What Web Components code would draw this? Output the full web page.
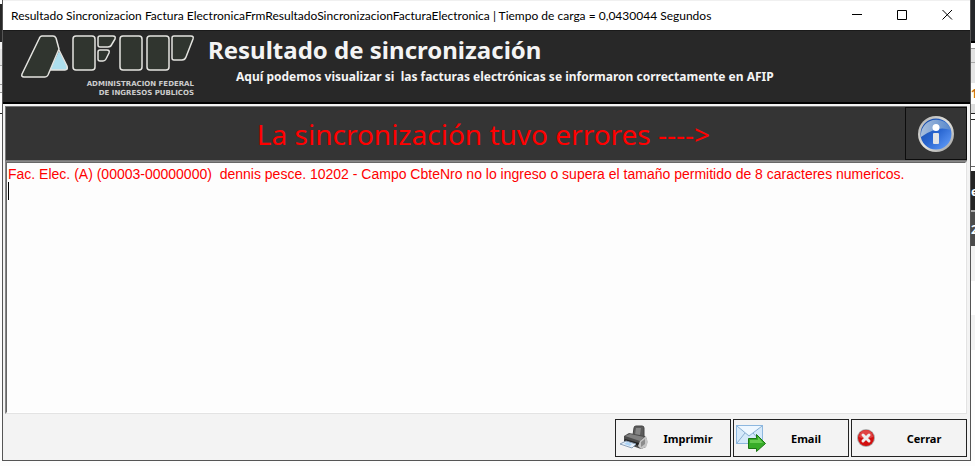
<!DOCTYPE html>
<html lang="es">
<head>
<meta charset="utf-8">
<title>Resultado Sincronizacion Factura Electronica</title>
<style>
  html, body { height: 100%; }
  body {
    margin: 0;
    background: #fdfdfd;
    font-family: "Noto Sans", "Open Sans", sans-serif;
  }
</style>
</head>
<body>
<desktop-area>
  <backdrop-strip slot="left" side="left"></backdrop-strip>
  <app-window>
    <title-bar slot="title">Resultado Sincronizacion Factura ElectronicaFrmResultadoSincronizacionFacturaElectronica | Tiempo de carga = 0,0430044 Segundos</title-bar>
    <form-header slot="header">
      <afip-logo slot="logo"></afip-logo>
      <span slot="heading">Resultado de sincronización</span>
      <span slot="detail">Aquí podemos visualizar si&nbsp; las facturas electrónicas se informaron correctamente en AFIP</span>
    </form-header>
    <status-banner>La sincronización tuvo errores ----&gt;</status-banner>
    <result-log label="Resultado" value="Fac. Elec. (A) (00003-00000000)  dennis pesce. 10202 - Campo CbteNro no lo ingreso o supera el tamaño permitido de 8 caracteres numericos."></result-log>
    <action-button slot="actions" icon="printer">Imprimir</action-button>
    <action-button slot="actions" icon="email">Email</action-button>
    <action-button slot="actions" icon="close">Cerrar</action-button>
  </app-window>
  <backdrop-strip slot="right" side="right">
    <span>1</span>
    <span>e</span>
    <span>2</span>
  </backdrop-strip>
</desktop-area>

<script>
class DesktopArea extends HTMLElement {
  constructor() {
    super();
    this.attachShadow({ mode: 'open' });
    this.shadowRoot.innerHTML = `
      <style>
        :host {
          display: grid;
          grid-template-columns: 2px 1fr 4px;
          height: 100vh;
          overflow: hidden;
        }
        main { display: flex; min-width: 0; padding-bottom: 5px; }
        ::slotted(app-window) { flex: 1; min-width: 0; }
      </style>
      <slot name="left"></slot>
      <main><slot></slot></main>
      <slot name="right"></slot>
    `;
  }
}

// The slice of the program behind that shows beside the dialog
class BackdropStrip extends HTMLElement {
  constructor() {
    super();
    this.attachShadow({ mode: 'open' });
    this.shadowRoot.innerHTML = `
      <style>
        :host { display: block; overflow: hidden; }
        :host([side="left"]) {
          background: linear-gradient(#fff 4px, #262626 4px 42px, #f4f4f4 42px 49px, #e6e6e6 49px 65px, #aaa 65px 66px,
            #f2f2f2 66px 84px, #999 84px 85px, #f2f2f2 85px 92px, #999 92px 93px, #fff 93px 113px, #222 113px 114px, #fdfdfd 114px);
        }
        :host([side="right"]) {
          background: linear-gradient(#242629 41px, #000 41px 43px, #fff 43px 48px, #999 48px 49px, #e2e2e2 49px 62px,
            #aaa 62px 63px, #e5e5e5 63px 83px, #fff 83px 104px, #ddd 104px 113px, #222 113px 114px, #fff 114px 119px,
            #222 119px 120px, #fff 120px 166px, #666 166px 167px, #fff 167px 171px, #242424 171px 210px, #aaa 210px 212px,
            #4b4b4b 212px 246px, #f2f2f2 246px 281px, #fff 281px 315px, #f2f2f2 315px 350px, #fdfdfd 350px);
        }
        ::slotted(span) {
          display: block;
          padding-top: 20px;
          color: #fff;
          font: bold 12px/18px "Noto Sans", sans-serif;
        }
        ::slotted(span:first-child) { padding: 85px 0 60px; color: #c46a10; }
      </style>
      <slot></slot>
    `;
  }
}

class AppWindow extends HTMLElement {
  constructor() {
    super();
    this.attachShadow({ mode: 'open' });
    this.shadowRoot.innerHTML = `
      <style>
        :host {
          display: flex;
          flex-direction: column;
          box-sizing: border-box;
          border: 1px solid #555;
          border-top: 0;
          background: #f3f3f3;
        }
        .body {
          flex: 1;
          display: flex;
          flex-direction: column;
          min-height: 0;
          padding: 2px 3px 0 2px;
        }
        ::slotted(result-log) { flex: 1; }
        footer {
          display: flex;
          justify-content: flex-end;
          gap: 2px;
          padding: 5px 3px 3px;
        }
      </style>
      <slot name="title"></slot>
      <slot name="header"></slot>
      <div class="body"><slot></slot></div>
      <footer><slot name="actions"></slot></footer>
    `;
  }
}

class TitleBar extends HTMLElement {
  constructor() {
    super();
    this.attachShadow({ mode: 'open' });
    this.shadowRoot.innerHTML = `
      <style>
        :host {
          display: flex;
          align-items: center;
          height: 29px;
          padding-left: 8px;
          border-top: 1px solid #f0f0f0;
          background: #fff;
          color: #000;
          font: 12px Lato, sans-serif;
        }
        .caption { flex: 1; min-width: 0; overflow: hidden; white-space: nowrap; }
        .controls { display: flex; }
        button {
          width: 45px;
          height: 28px;
          padding: 0;
          border: 0;
          background: none;
        }
        svg { display: block; margin: auto; fill: none; stroke: #000; }
      </style>
      <span class="caption"><slot></slot></span>
      <span class="controls">
        <button aria-label="Minimizar"><svg width="11" height="11"><path d="M0 4.500H10"/></svg></button>
        <button aria-label="Maximizar"><svg width="11" height="11"><path d="M.5.500H9.500V9.500H.5Z"/></svg></button>
        <button aria-label="Cerrar"><svg width="11" height="11"><path d="M.5 0 10 9.500M10 0 .5 9.500"/></svg></button>
      </span>
    `;
  }
}

class FormHeader extends HTMLElement {
  constructor() {
    super();
    this.attachShadow({ mode: 'open' });
    this.shadowRoot.innerHTML = `
      <style>
        :host {
          display: flex;
          box-sizing: border-box;
          height: 74px;
          padding-left: 16px;
          gap: 13px;
          border-top: 1px solid #1a1a1a;
          border-bottom: 2px solid #000;
          background: #282828;
          color: #f4f4f4;
        }
        h1 { margin: 3px 0 0; font: bold 24px/32px "Noto Sans", sans-serif; white-space: nowrap; }
        p { margin: 3px 0 0 28px; font: bold 12px/16px "Noto Sans", sans-serif; white-space: nowrap; }
      </style>
      <slot name="logo"></slot>
      <div>
        <h1><slot name="heading"></slot></h1>
        <p><slot name="detail"></slot></p>
      </div>
    `;
  }
}

class AfipLogo extends HTMLElement {
  constructor() {
    super();
    this.attachShadow({ mode: 'open' });
    this.shadowRoot.innerHTML = `
      <style>
        :host { display: block; width: 176px; padding-top: 3px; }
        svg { display: block; }
        .mark { fill: #30352f; stroke: #e4e4e0; stroke-width: 1.500; stroke-linejoin: round; }
        text { fill: #ccc; font: bold 7px "DejaVu Sans", sans-serif; text-anchor: end; }
      </style>
      <svg width="176" height="64" viewBox="19 34 176 64" role="img" aria-label="AFIP">
        <path d="M59 51 68 68Q68 70 66 70H50Z" fill="#addfee"/>
        <g class="mark">
          <path d="M42 36H53Q55 36 56 38L59 49 48 75Q47 77 45 77H24Q21 77 22 74L39 39Q40 36 42 36Z"/>
          <path d="M59 50 67 66Q68 70 65 70H50" style="fill:none"/>
          <rect x="73" y="36" width="22" height="34" rx="3"/>
          <path d="M100 36H113Q116 36 115 39L112 44Q111 47 108 47H100Q98 47 98 45V38Q98 36 100 36Z"/>
          <path d="M100 50H107Q110 50 109 53L106 59Q105 61 103 61H100Q98 61 98 59V52Q98 50 100 50Z"/>
          <rect x="120" y="36" width="22" height="34" rx="3"/>
          <rect x="147" y="36" width="22" height="34" rx="3"/>
          <path d="M174 36H191Q194 36 193 39L186 57Q185 60 182 60H174Q172 60 172 58V38Q172 36 174 36Z"/>
        </g>
        <text x="194" y="86">ADMINISTRACION FEDERAL</text>
        <text x="194" y="95">DE INGRESOS PUBLICOS</text>
      </svg>
    `;
  }
}

class StatusBanner extends HTMLElement {
  constructor() {
    super();
    this.attachShadow({ mode: 'open' });
    this.shadowRoot.innerHTML = `
      <style>
        :host {
          display: flex;
          align-items: stretch;
          height: 53px;
          border: 1px solid #777;
          border-width: 1px 0 1px 1px;
          background: #343434;
          color: #f00;
          font: 28px "Noto Sans", sans-serif;
        }
        /* left padding balances the button, so the text centres on the window */
        .text { flex: 1; align-self: center; padding-left: 56px; text-align: center; }
        button {
          width: 62px;
          padding: 0;
          border: 1px solid #0c0c0c;
          background: #343434;
        }
        svg { display: block; margin: auto; }
      </style>
      <span class="text"><slot></slot></span>
      <button aria-label="Información">
        <svg width="38" height="38" viewBox="0 0 38 38">
          <defs>
            <linearGradient id="rim" x1="0" y1="0" x2="1" y2="1">
              <stop offset="0" stop-color="#aaa"/><stop offset=".5" stop-color="#e4e4e0"/><stop offset="1" stop-color="#999"/>
            </linearGradient>
            <linearGradient id="sea" x1="0" y1="0" x2="1" y2="1">
              <stop offset="0" stop-color="#1748a0"/><stop offset=".5" stop-color="#2865d0"/><stop offset="1" stop-color="#6aa4ff"/>
            </linearGradient>
            <linearGradient id="sky" x1="0" y1="0" x2="1" y2="0">
              <stop offset="0" stop-color="#a9bfdc"/><stop offset="1" stop-color="#5788cc"/>
            </linearGradient>
          </defs>
          <circle cx="19" cy="19" r="18" fill="url(#rim)"/>
          <circle cx="19" cy="19" r="15.500" fill="url(#sea)"/>
          <path d="M4 22A15.500 15.500 0 0 1 34 15Q25 12 17 15T4 22Z" fill="url(#sky)"/>
          <circle cx="19" cy="12.500" r="3.500" fill="#fff"/>
          <rect x="16" y="18" width="6" height="11" rx="1" fill="#e2e4e6"/>
        </svg>
      </button>
    `;
  }
}

class ResultLog extends HTMLElement {
  constructor() {
    super();
    this.attachShadow({ mode: 'open' });
    this.shadowRoot.innerHTML = `
      <style>
        :host {
          display: flex;
          position: relative;
          min-height: 0;
          border: 1px solid #888;
          border-right-color: #e3e3e3;
          border-bottom-color: #e3e3e3;
        }
        textarea {
          flex: 1;
          min-width: 0;
          margin: 0;
          padding: 3px 0 0 1px;
          border: 1px solid #666;
          border-right-color: #fff;
          border-bottom-color: #fff;
          border-radius: 0;
          outline: 0;
          resize: none;
          overflow: hidden;
          background: #fdfdfd;
          color: #f00;
          font: 14px/17px "Liberation Sans", sans-serif;
        }
        .caret { position: absolute; left: 2px; top: 20px; width: 1px; height: 18px; background: #000; }
      </style>
      <textarea spellcheck="false"></textarea>
      <span class="caret"></span>
    `;
    const area = this.shadowRoot.querySelector('textarea');
    area.setAttribute('aria-label', this.getAttribute('label') || '');
    area.textContent = this.getAttribute('value') || '';
  }
}

const ICONS = {
  printer: `
    <g transform="translate(1 2)">
      <path d="M14 11 15 4Q15 2 17 2H23Q25 2 25 4V13Z" fill="#5c5c5c" stroke="#444"/>
      <path d="M17 4H22L21 11H16Z" fill="#858585"/>
      <path d="M5 12 10 9 26 12 28 15 27 23 22 25 5 19Z" fill="#4c4c4c"/>
      <path d="M6 12 11 10 25 13 21 17Z" fill="#808080"/>
      <path d="M6 15 20 19V22L5 17Z" fill="#222"/>
      <path d="M21 17 27 12 29 18 27 23 22 25 19 22Z" fill="#c4c4c4"/>
      <path d="M22 18 26 15V20L22 23Z" fill="#8c8c8c"/>
      <path d="M7 17 17 20 13 24 1 20Z" fill="#e6f0fa" stroke="#8aa0b8"/>
      <path d="M8 18 13 20 11 22 5 20Z" fill="#add3f5"/>
    </g>`,
  email: `
    <rect x=".5" y="3.500" width="26" height="18" fill="#d5e9fa" stroke="#8db7df"/>
    <path d="M1 4 13 14 26 4M1 21 9 11M26 21 17 11" fill="none" stroke="#8bb0d2"/>
    <path d="M2 4H25L13 13Z" fill="#eef7ff"/>
    <path d="M12.500 16.500H20.500V12.500L29.500 21.500 20.500 29.500V26.500H12.500Z" fill="#37ac28" stroke="#1c7714"/>
    <path d="M14 18H22V15L27 21H14Z" fill="#66cc50"/>`,
  close: `
    <circle cx="12" cy="16" r="9" fill="#aaa"/>
    <circle cx="12" cy="16" r="8" fill="#d20f0f"/>
    <path d="M5 15A7 7 0 0 1 19 15Q12 18 5 15Z" fill="#e04444"/>
    <path d="M9 13 15 19M15 13 9 19" stroke="#eee" stroke-width="3" stroke-linecap="round"/>`
};

class ActionButton extends HTMLElement {
  constructor() {
    super();
    this.attachShadow({ mode: 'open' });
    this.shadowRoot.innerHTML = `
      <style>
        :host { display: block; }
        button {
          display: flex;
          align-items: center;
          box-sizing: border-box;
          width: 116px;
          height: 38px;
          padding: 0 4px 0 2px;
          border: 1px solid #222;
          background: #f3f3f3;
          color: #000;
          font: bold 11px "Noto Sans", sans-serif;
        }
        .label { flex: 1; text-align: center; }
      </style>
      <button>
        <svg width="32" height="32" viewBox="0 0 32 32" aria-hidden="true">${ICONS[this.getAttribute('icon')] || ''}</svg>
        <span class="label"><slot></slot></span>
      </button>
    `;
  }
}

// Register the custom elements
customElements.define('desktop-area', DesktopArea);
customElements.define('backdrop-strip', BackdropStrip);
customElements.define('app-window', AppWindow);
customElements.define('title-bar', TitleBar);
customElements.define('form-header', FormHeader);
customElements.define('afip-logo', AfipLogo);
customElements.define('status-banner', StatusBanner);
customElements.define('result-log', ResultLog);
customElements.define('action-button', ActionButton);
</script>
</body>
</html>
